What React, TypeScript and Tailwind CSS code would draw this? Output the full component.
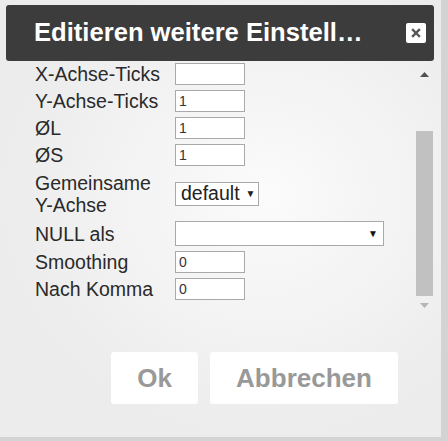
const font = { fontFamily: '"Liberation Sans", Arial, sans-serif' };

function Field({ value }: { value: string }) {
  return (
    <input
      readOnly
      value={value}
      className="h-[22px] w-[70px] border border-[#a9a9a9] bg-white pl-[3px] text-[14px] text-[#333] outline-none"
    />
  );
}

function Row({ label, children, h = 'h-[22px]' }: { label: React.ReactNode; children: React.ReactNode; h?: string }) {
  return (
    <div className={`flex items-center ${h}`}>
      <div className="w-[140px] text-[19.5px] leading-[22px] text-[#2a2a2a]">{label}</div>
      {children}
    </div>
  );
}

export default function App() {
  return (
    <div className="h-[441px] w-[448px] overflow-hidden bg-[#d3d3d3]" style={font}>
      <div className="flex h-[437px] w-[441px] flex-col bg-[radial-gradient(ellipse_at_60%_45%,#fbfbfb,#ececec_70%)] pt-[5px]">
        <div className="ml-[6px] flex h-[56px] w-[428px] shrink-0 items-center justify-between rounded-[3px] bg-[#3c3c3c] pl-[28px] pr-[8px]">
          <span className="text-[25.6px] font-bold leading-none text-white">Editieren weitere Einstell…</span>
          <button className="flex h-[20px] w-[20px] items-center justify-center rounded-[2px] bg-white">
            <svg width="10" height="10" viewBox="0 0 10 10">
              <path d="M2 2 L8 8 M8 2 L2 8" stroke="#555" strokeWidth="2.4" strokeLinecap="square" />
            </svg>
          </button>
        </div>

        <div className="ml-[6px] flex h-[249px] w-[428px] shrink-0">
          <div className="flex w-[410px] flex-col gap-[5px] pl-[29px] pt-[2px]">
            <Row label="X-Achse-Ticks">
              <Field value="" />
            </Row>
            <Row label="Y-Achse-Ticks">
              <Field value="1" />
            </Row>
            <Row label="ØL">
              <Field value="1" />
            </Row>
            <Row label="ØS">
              <Field value="1" />
            </Row>
            <Row label={<>Gemeinsame<br />Y-Achse</>} h="h-[45px]">
              <div className="flex h-[24px] w-[84px] items-center border border-[#a9a9a9] bg-white pl-[5px] text-[19.5px] text-[#222]">
                default
                <span className="ml-[6px] text-[10px]">▼</span>
              </div>
            </Row>
            <Row label="NULL als" h="h-[25px]">
              <div className="flex h-[25px] w-[209px] items-center justify-end border border-[#a9a9a9] bg-white pr-[5px]">
                <span className="text-[10px] text-[#111]">▼</span>
              </div>
            </Row>
            <Row label="Smoothing">
              <Field value="0" />
            </Row>
            <Row label="Nach Komma">
              <Field value="0" />
            </Row>
          </div>

          <div className="flex w-[17px] flex-col items-center">
            <svg className="mt-[11px]" width="9" height="5" viewBox="0 0 9 5">
              <path d="M0 5 L4.5 0 L9 5 Z" fill="#505050" />
            </svg>
            <div className="mt-[54px] h-[165px] w-[17px] bg-[#c1c1c1]" />
            <svg className="mt-[7px]" width="9" height="5" viewBox="0 0 9 5">
              <path d="M0 0 L9 0 L4.5 5 Z" fill="#b5b5b5" />
            </svg>
          </div>
        </div>

        <div className="mt-[42px] flex gap-[12px] pl-[111px]">
          <button className="h-[52px] w-[87px] rounded-[3px] bg-white text-[26px] font-bold text-[#999]">Ok</button>
          <button className="h-[52px] w-[188px] rounded-[3px] bg-white text-[26px] font-bold text-[#999]">Abbrechen</button>
        </div>
      </div>
    </div>
  );
}
